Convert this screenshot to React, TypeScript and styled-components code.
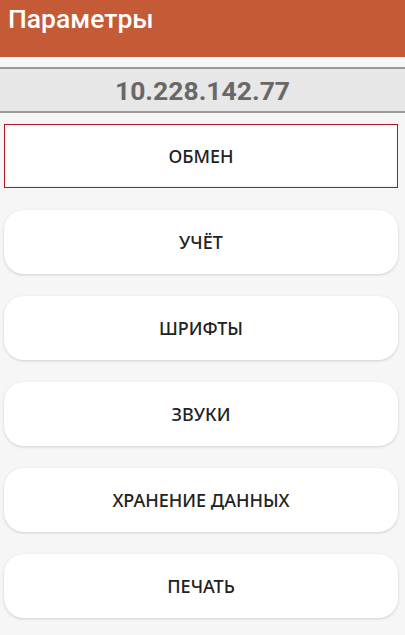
import React from 'react';
import styled, { createGlobalStyle } from 'styled-components';

const GlobalStyle = createGlobalStyle`
    html, body {
        margin: 0;
        padding: 0;
        background: #f6f6f6;
        font-family: Roboto, "Noto Sans", sans-serif;
    }
`;

const Screen = styled.div`
    width: 405px;
    height: 635px;
    display: flex;
    flex-direction: column;
    background: #f6f6f6;
    overflow: hidden;
`;

const Header = styled.header`
    height: 57px;
    background: #c45a36;
    color: #fff;
    font-size: 26.5px;
    font-weight: 500;
    padding: 3px 8px 0;
    box-sizing: border-box;
`;

const AddressBar = styled.div`
    margin-top: 10px;
    height: 46px;
    box-sizing: border-box;
    border-top: 2px solid #9a9a9a;
    border-bottom: 2px solid #9a9a9a;
    background: #e6e7e6;
    color: #686868;
    font-size: 26.5px;
    font-weight: 700;
    display: flex;
    align-items: center;
    justify-content: center;
`;

const Menu = styled.nav`
    display: flex;
    flex-direction: column;
    gap: 22px;
    padding: 11px 7px 0 4px;
`;

const MenuButton = styled.button<{ $focused?: boolean }>`
    height: 64px;
    border: ${(p) => (p.$focused ? '1px solid #b0161e' : 'none')};
    border-radius: ${(p) => (p.$focused ? '0' : '20px')};
    background: #fff;
    box-shadow: ${(p) => (p.$focused ? 'inset 0 -1px 2px rgba(0,0,0,0.06)' : '0 1px 3px rgba(0, 0, 0, 0.16)')};
    font-family: "Noto Sans", Roboto, sans-serif;
    font-size: 18px;
    font-weight: 500;
    color: #222;
    text-transform: uppercase;
    cursor: pointer;
`;

const items = ['Обмен', 'Учёт', 'Шрифты', 'Звуки', 'Хранение данных', 'Печать'];

const App = () => {
    return (
        <Screen>
            <GlobalStyle />
            <Header>Параметры</Header>
            <AddressBar>10.228.142.77</AddressBar>
            <Menu>
                {items.map((item, i) => (
                    <MenuButton key={item} $focused={i === 0}>
                        {item}
                    </MenuButton>
                ))}
            </Menu>
        </Screen>
    );
};

export default App;
